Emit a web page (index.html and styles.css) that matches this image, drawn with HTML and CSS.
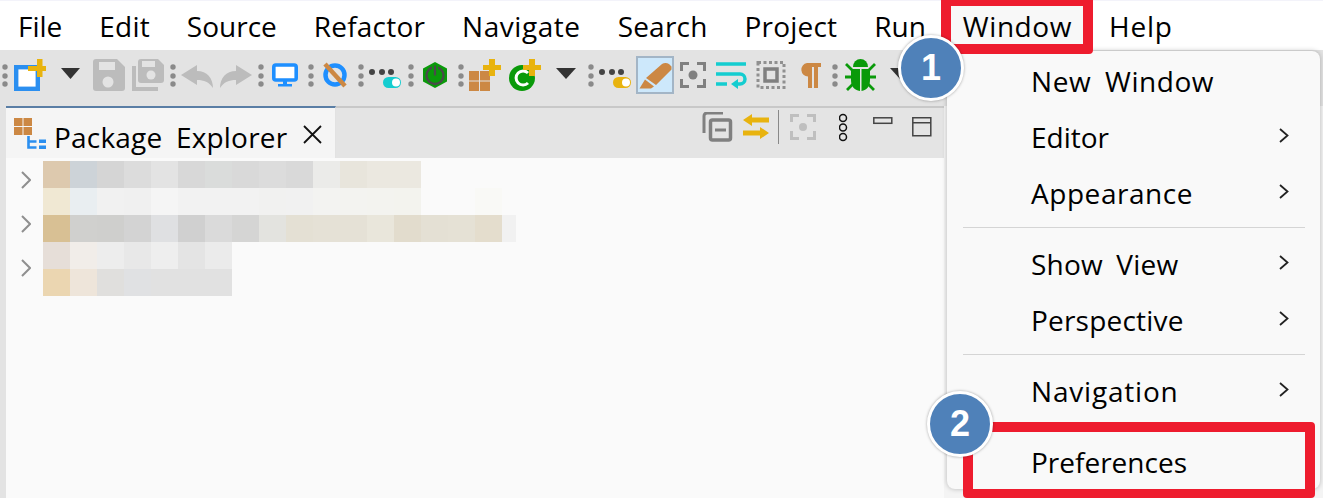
FILE: index.html
```html
<!DOCTYPE html>
<html lang="en">
<head>
<meta charset="utf-8">
<title>Eclipse Window menu</title>
<link rel="stylesheet" href="styles.css">
</head>
<body>
<div class="app">
  <nav class="menubar">
    <span class="mb-item">File</span><span class="mb-item t-a">Edit</span><span class="mb-item">Source</span><span class="mb-item t-a">Refactor</span><span class="mb-item t-b">Navigate</span><span class="mb-item t-a">Search</span><span class="mb-item t-a">Project</span><span class="mb-item">Run</span><span class="mb-item mb-active t-b">Window</span><span class="mb-item t-c">Help</span>
  </nav>

  <div class="toolbar">
    <svg width="12" height="56" viewBox="0 0 12 56"><g class="grip"><circle cx="3" cy="17" r="2.7"/><circle cx="3" cy="26" r="2.7"/><circle cx="3" cy="34" r="2.7"/></g></svg>
    <svg width="47" height="56" viewBox="0 0 47 56"><rect x="2.2" y="17.2" width="21.6" height="21.6" fill="#fff" stroke="#2b8ff0" stroke-width="4.4"/><path d="M23 9h5.500v7H32v5h-3.500v6H23v-6h-9v-5h9z" fill="#e8b30f"/></svg>
    <svg width="32" height="56" viewBox="0 0 32 56"><path d="M0 18h19l-9.500 11z" fill="#333"/></svg>
    <svg width="39" height="56" viewBox="0 0 39 56"><path d="M3 9h21l8 8v21a3 3 0 0 1-3 3H3a3 3 0 0 1-3-3V12a3 3 0 0 1 3-3z" fill="#bcbcbc"/><rect x="6" y="12" width="16" height="8" fill="#e3e3e3"/><circle cx="15" cy="32" r="5.500" fill="#e3e3e3"/></svg>
    <svg width="38" height="56" viewBox="0 0 38 56"><path d="M9 9h17l6 6v15a3 3 0 0 1-3 3H9a3 3 0 0 1-3-3V12a3 3 0 0 1 3-3z" fill="#bcbcbc"/><rect x="10" y="11" width="13" height="6" fill="#e3e3e3"/><circle cx="19" cy="25" r="4.500" fill="#e3e3e3"/><path d="M2 16v23h24" fill="none" stroke="#bcbcbc" stroke-width="4"/></svg>
    <svg width="11" height="56" viewBox="0 0 11 56"><g class="grip"><circle cx="3" cy="17" r="2.7"/><circle cx="3" cy="26" r="2.7"/><circle cx="3" cy="34" r="2.700"/></g></svg>
    <svg width="39" height="56" viewBox="0 0 39 56"><path d="M0 25l16-10v6c10 0 16 7 16 17-4-6-9-8-16-8v5z" fill="#bcbcbc"/></svg>
    <svg width="38" height="56" viewBox="0 0 38 56"><path d="M32 25L16 15v6C6 21 0 28 0 38c4-6 9-8 16-8v5z" fill="#bcbcbc"/></svg>
    <svg width="14" height="56" viewBox="0 0 14 56"><g class="grip"><circle cx="3" cy="17" r="2.7"/><circle cx="3" cy="26" r="2.7"/><circle cx="3" cy="34" r="2.7"/></g></svg>
    <svg width="36" height="56" viewBox="0 0 36 56"><rect x="1.800" y="15" width="22.400" height="15" rx="2" fill="#fff" stroke="#1e8fff" stroke-width="3.600"/><path d="M11 31h4v3h5v2.500H6V34h5z" fill="#1e8fff"/></svg>
    <svg width="15" height="56" viewBox="0 0 15 56"><g class="grip"><circle cx="3" cy="17" r="2.7"/><circle cx="3" cy="26" r="2.7"/><circle cx="3" cy="34" r="2.7"/></g></svg>
    <svg width="35" height="56" viewBox="0 0 35 56"><circle cx="12" cy="25" r="9.500" fill="none" stroke="#1e8fff" stroke-width="4.500"/><path d="M2 14l20 22" stroke="#cc8844" stroke-width="4.500"/></svg>
    <svg width="11" height="56" viewBox="0 0 11 56"><g class="grip"><circle cx="3" cy="17" r="2.7"/><circle cx="3" cy="26" r="2.7"/><circle cx="3" cy="34" r="2.7"/></g></svg>
    <svg width="39" height="56" viewBox="0 0 39 56"><g fill="#444"><circle cx="3" cy="22" r="3"/><circle cx="13" cy="22" r="3"/><circle cx="22" cy="22" r="3"/></g><rect x="14" y="27" width="18" height="11" rx="5.500" fill="#14cdd0"/><circle cx="27" cy="32.500" r="4" fill="#fff"/></svg>
    <svg width="15" height="56" viewBox="0 0 15 56"><g class="grip"><circle cx="3" cy="17" r="2.7"/><circle cx="3" cy="26" r="2.7"/><circle cx="3" cy="34" r="2.7"/></g></svg>
    <svg width="35" height="56" viewBox="0 0 35 56"><path d="M12 12l12 6.500v13L12 38 0 31.500v-13z" fill="#0a9a0a"/><circle cx="12" cy="25.500" r="8.500" fill="none" stroke="#4a4a4a" stroke-width="2.400"/><path d="M12 15v9" stroke="#0a9a0a" stroke-width="6"/><path d="M12 15.500v10" stroke="#4a4a4a" stroke-width="2.200"/></svg>
    <svg width="11" height="56" viewBox="0 0 11 56"><g class="grip"><circle cx="3" cy="17" r="2.7"/><circle cx="3" cy="26" r="2.7"/><circle cx="3" cy="34" r="2.7"/></g></svg>
    <svg width="40" height="56" viewBox="0 0 40 56"><g fill="#cc8844"><rect y="21" width="10" height="9.500"/><rect x="11" y="21" width="10" height="9.500"/><rect y="31.500" width="10" height="9.500"/><rect x="11" y="31.500" width="10" height="9.500"/></g><path d="M20 9h6v6h6v5h-6v6h-6v-6h-6v-5h6z" fill="#e8b30f"/></svg>
    <svg width="47" height="56" viewBox="0 0 47 56"><circle cx="13" cy="28" r="13" fill="#0a9a0a"/><path d="M19 23a7 7 0 1 0 0 10" fill="none" stroke="#fff" stroke-width="3"/><path d="M20 9h6v6h6v5h-6v6h-6v-6h-6v-5h6z" fill="#e8b30f"/></svg>
    <svg width="32" height="56" viewBox="0 0 32 56"><path d="M0 18h20l-10 11z" fill="#333"/></svg>
    <svg width="10" height="56" viewBox="0 0 10 56"><g class="grip"><circle cx="3" cy="17" r="2.7"/><circle cx="3" cy="26" r="2.7"/><circle cx="3" cy="34" r="2.7"/></g></svg>
    <svg width="38" height="56" viewBox="0 0 38 56"><g fill="#444"><circle cx="4" cy="22" r="3"/><circle cx="14" cy="22" r="3"/><circle cx="23" cy="22" r="3"/></g><rect x="15" y="27" width="18" height="11" rx="5.500" fill="#e8b30f"/><circle cx="28" cy="32.500" r="4" fill="#fff"/></svg>
    <svg width="44" height="56" viewBox="0 0 44 56"><rect x="1" y="7" width="36" height="36" fill="#cde8fb" stroke="#a3b5c6" stroke-width="2"/><path d="M26 14c2-1.500 5-1.500 7 0l2.500 2.500v3L20 35l-10-7zM9 29.500l9 7-3 2H3.500z" fill="#cc8844"/></svg>
    <svg width="35" height="56" viewBox="0 0 35 56"><path d="M1.500 21v-7.500H9M17 13.500h7.500V21M24.500 29v7.500H17M9 36.500H1.500V29" fill="none" stroke="#808080" stroke-width="3"/><circle cx="13" cy="25" r="4.500" fill="#808080"/></svg>
    <svg width="41" height="56" viewBox="0 0 41 56"><path d="M1 14h30M1 24h24a5 5 0 0 1 0 10h-6M1 34h11" fill="none" stroke="#14cdd0" stroke-width="3.500"/><path d="M16 34l7-5v10z" fill="#14cdd0"/></svg>
    <svg width="43" height="56" viewBox="0 0 43 56"><rect x="2" y="12.500" width="26" height="25" fill="none" stroke="#909090" stroke-width="3" stroke-dasharray="3 2.500"/><rect x="9" y="19" width="12" height="12" fill="none" stroke="#808080" stroke-width="3.500"/></svg>
    <svg width="33" height="56" viewBox="0 0 33 56"><path d="M8 13h14v4h-3v21h-4V17h-2v21H9V26.500A6.800 6.800 0 0 1 8 13z" fill="#cc8844"/></svg>
    <svg width="13" height="56" viewBox="0 0 13 56"><g class="grip"><circle cx="3" cy="17" r="2.7"/><circle cx="3" cy="26" r="2.7"/><circle cx="3" cy="34" r="2.7"/></g></svg>
    <svg width="45" height="56" viewBox="0 0 45 56"><path d="M8 17a7.500 8 0 0 1 15 0z" fill="#0a9a0a"/><path d="M6 19h9v22C9 40 6 36 6 30zM16.500 19H25v11c0 6-3 10-8.500 11z" fill="#0a9a0a"/><path d="M1 14l6 6M30 14l-6 6M0 27h7M31 27h-7M2 40l6-6M29 40l-6-6" stroke="#0a9a0a" stroke-width="2.800"/></svg>
    <svg width="32" height="56" viewBox="0 0 32 56"><path d="M0 18h20l-10 11z" fill="#333"/></svg>
  </div>

  <main class="workbench">
    <section class="view">
      <div class="view-head">
        <div class="tab">
          <svg class="tab-icon" width="32" height="32" viewBox="0 0 32 32"><g fill="#cc8844"><rect width="8.500" height="8"/><rect x="9.500" width="8.500" height="8"/><rect y="9" width="8.500" height="8"/><rect x="9.500" y="9" width="8.500" height="8"/></g><path d="M14.500 18v11.500h8M14.500 23.500h8" fill="none" stroke="#2b8ff0" stroke-width="2.600"/><rect x="25" y="21.500" width="7" height="3.500" fill="#2b8ff0"/><rect x="25" y="27.500" width="7" height="3.500" fill="#2b8ff0"/></svg>
          <span class="tab-label">Package Explorer</span>
          <svg class="tab-close" width="19" height="19" viewBox="0 0 19 19"><path d="M1 1l17 17M18 1L1 18" stroke="#111" stroke-width="1.800"/></svg>
        </div>
        <div class="view-tools">
          <svg width="41" height="36" viewBox="0 0 41 36"><path d="M2 21V4a3 3 0 0 1 3-3h16" fill="none" stroke="#808080" stroke-width="3"/><rect x="8.500" y="8" width="20" height="20" rx="2" fill="none" stroke="#808080" stroke-width="3.500"/><path d="M13 18h11" stroke="#808080" stroke-width="3"/></svg>
          <svg width="35" height="36" viewBox="0 0 35 36"><path d="M0 8l9-6v3.500h17v5H9V14zM26 21l-9-6v3.500H0v5h17V27z" fill="#e8b30f"/></svg>
          <span class="tool-sep"></span>
          <svg width="49" height="36" viewBox="0 0 49 36"><path d="M1.500 10V3.500H9M17 3.500h7.500V10M24.500 19v7.500H17M9 26.500H1.500V19" fill="none" stroke="#bfbfbf" stroke-width="3"/><circle cx="13" cy="15" r="4" fill="#bfbfbf"/></svg>
          <svg width="34" height="36" viewBox="0 0 34 36"><g fill="none" stroke="#111" stroke-width="1.500"><circle cx="4" cy="6" r="3.500"/><circle cx="4" cy="15.500" r="3.500"/><circle cx="4" cy="25" r="3.500"/></g></svg>
          <svg width="39" height="36" viewBox="0 0 39 36"><rect x=".8" y="5.800" width="18" height="5.500" fill="none" stroke="#444" stroke-width="1.500"/></svg>
          <svg width="20" height="36" viewBox="0 0 20 36"><path d="M.8 5.800h18v18H.8zM.8 10.800h18" fill="none" stroke="#444" stroke-width="1.500"/></svg>
        </div>
      </div>
      <div class="tree">
        <div class="tree-row"><svg width="10" height="18" viewBox="0 0 10 18"><path d="M1 1l8 8-8 8" fill="none" stroke="#8f8f8f" stroke-width="2"/></svg></div>
        <div class="tree-row"><svg width="10" height="18" viewBox="0 0 10 18"><path d="M1 1l8 8-8 8" fill="none" stroke="#8f8f8f" stroke-width="2"/></svg></div>
        <div class="tree-row"><svg width="10" height="18" viewBox="0 0 10 18"><path d="M1 1l8 8-8 8" fill="none" stroke="#8f8f8f" stroke-width="2"/></svg></div>
        <div class="blur">
          <div class="blur-row"><i style="background:#ddc9ae"></i><i style="background:#cdd3d8"></i><i style="background:#d5d5d5"></i><i style="background:#dcdcdc"></i><i style="background:#e3e3e3"></i><i style="background:#d8d8d8"></i><i style="background:#dadcdb"></i><i style="background:#d9d9d9"></i><i style="background:#dcdcdc"></i><i style="background:#d9d9d9"></i><i style="background:#ebebe9"></i><i style="background:#e8e5dc"></i><i style="background:#ebe8e0"></i><i style="background:#ebe8e0"></i></div>
          <div class="blur-row"><i style="background:#f0e8d3"></i><i style="background:#e9eef1"></i><i style="background:#f1f1f1"></i><i style="background:#f0f0f0"></i><i style="background:#f5f5f5"></i><i style="background:#f2f2f2"></i><i style="background:#f2f2f2"></i><i style="background:#f2f2f2"></i><i style="background:#f1f1f0"></i><i style="background:#f1f1f1"></i><i style="background:#f3f3f1"></i><i style="background:#f3f3f0"></i><i style="background:#f3f3ef"></i><i style="background:#f3f3ee"></i><i></i><i></i><i style="background:#f9f9f6"></i><i style="background:#fafafa"></i></div>
          <div class="blur-row"><i style="background:#d8c094"></i><i style="background:#d0d0ce"></i><i style="background:#cfcfcd"></i><i style="background:#d3d3d3"></i><i style="background:#dfe0e2"></i><i style="background:#d0d0d0"></i><i style="background:#dadada"></i><i style="background:#d5d5d4"></i><i style="background:#e3e3df"></i><i style="background:#e4e0d4"></i><i style="background:#e5e1d6"></i><i style="background:#e5e1d6"></i><i style="background:#e9e6db"></i><i style="background:#e2dccd"></i><i style="background:#e4e0d4"></i><i style="background:#e5e1d5"></i><i style="background:#e4ddcd"></i><i class="half" style="background:#f1f1f1"></i></div>
          <div class="blur-row"><i style="background:#e6ded8"></i><i style="background:#f1ede9"></i><i style="background:#ededed"></i><i style="background:#e8e8e8"></i><i style="background:#eeeeee"></i><i style="background:#e4e4e4"></i><i style="background:#ebebeb"></i></div>
          <div class="blur-row"><i style="background:#ebd6b1"></i><i style="background:#eee5da"></i><i style="background:#e0dfdd"></i><i style="background:#e0e1e3"></i><i style="background:#e1e1e1"></i><i style="background:#e1e1e1"></i><i style="background:#e1e1e1"></i></div>
        </div>
      </div>
    </section>
  </main>

  <div class="popup">
    <div class="pm-item t-b">New Window</div>
    <div class="pm-item">Editor<svg class="pm-chev" width="10" height="15" viewBox="0 0 10 15"><path d="M1 1l7.500 6.500L1 14" fill="none" stroke="#222" stroke-width="1.800"/></svg></div>
    <div class="pm-item t-b">Appearance<svg class="pm-chev" width="10" height="15" viewBox="0 0 10 15"><path d="M1 1l7.500 6.500L1 14" fill="none" stroke="#222" stroke-width="1.800"/></svg></div>
    <div class="pm-sep"></div>
    <div class="pm-item t-a">Show View<svg class="pm-chev" width="10" height="15" viewBox="0 0 10 15"><path d="M1 1l7.500 6.500L1 14" fill="none" stroke="#222" stroke-width="1.800"/></svg></div>
    <div class="pm-item t-a">Perspective<svg class="pm-chev" width="10" height="15" viewBox="0 0 10 15"><path d="M1 1l7.500 6.500L1 14" fill="none" stroke="#222" stroke-width="1.800"/></svg></div>
    <div class="pm-sep"></div>
    <div class="pm-item t-c">Navigation<svg class="pm-chev" width="10" height="15" viewBox="0 0 10 15"><path d="M1 1l7.500 6.500L1 14" fill="none" stroke="#222" stroke-width="1.800"/></svg></div>
    <div class="pm-gap"></div>
    <div class="pm-item">Preferences</div>
  </div>

  <div class="mark mark-window"></div>
  <div class="mark mark-prefs"></div>
  <div class="badge badge-1">1</div>
  <div class="badge badge-2">2</div>
</div>
</body>
</html>
```

FILE: styles.css
```css
* { box-sizing: border-box; }
html, body { margin: 0; padding: 0; }
body { font-family: "Open Sans", "Noto Sans", sans-serif; color: #000; background: #fbfbfb; overflow: hidden; }

.app { position: relative; width: 1323px; height: 498px; overflow: hidden; background: #f4f4f4; }

.t-a { letter-spacing: .2px; }
.t-b { letter-spacing: .55px; }
.t-c { letter-spacing: .8px; }

.menubar { display: flex; height: 50px; background: #fff; font-size: 28px; line-height: 50px; border-top: 1px solid #f3f3fa; }
.mb-item { padding: 0 18.5px; white-space: pre; }
.mb-item:first-child { padding-left: 18px; }
.mb-active { background: #f8f8f8; }

.toolbar { display: flex; height: 56px; padding-left: 2px; background: #e3e3e3; }
.toolbar svg { flex: none; display: block; }
.grip circle { fill: #8a8a8a; }

.workbench { height: 392px; width: 944px; padding-left: 6px; background: #e3e3e3; }
.view { display: flex; flex-direction: column; height: 100%; }

.view-head { display: flex; justify-content: space-between; height: 52px; background: #e4e4e4; border-top: 2px solid #c8c8c8; }
.tab { display: flex; align-items: flex-start; width: 330px; height: 52px; margin-top: -2px; padding: 10px 0 0 8px; background: #f5f5f5; border-top: 2px solid #5a7ea5; border-right: 1px solid #e2e2e2; }
.tab-icon { flex: none; }
.tab-label { margin: 2px 0 0 8px; font-size: 28px; line-height: 34px; white-space: pre; word-spacing: 6px; letter-spacing: .2px; }
.tab-close { flex: none; margin: 7px 0 0 16px; }

.view-tools { display: flex; align-items: flex-start; padding: 2px 12px 0 0; }
.view-tools svg { flex: none; display: block; margin-top: 2px; }
.tool-sep { width: 1px; height: 34px; margin: 0 11px 0 0; background: #888; }

.tree { position: relative; flex: 1; background: #fafafa; }
.tree-row { display: flex; align-items: center; height: 44px; padding-left: 15px; }
.tree-row svg { display: block; }

.blur { position: absolute; left: 37px; top: 3px; }
.blur-row { display: flex; height: 27px; }
.blur-row i { display: block; flex: none; width: 27px; height: 27px; }
.blur-row i.half { width: 14px; }

.popup { position: absolute; left: 947px; top: 51px; width: 373px; height: 438px; padding-top: 2px; background: #f9f9f9; border-radius: 8px; box-shadow: 0 0 5px rgba(0, 0, 0, .25); font-size: 28px; word-spacing: 6px; }
.pm-item { display: flex; align-items: center; justify-content: space-between; height: 56px; padding: 0 31px 0 84px; white-space: pre; }
.pm-chev { display: block; margin-bottom: 3px; }
.pm-sep { height: 15px; margin: 0 15px 0 16px; padding-top: 6px; }
.pm-sep::before { content: ""; display: block; height: 1px; background: #d5d5d5; }
.pm-gap { height: 15px; }

.mark { position: absolute; border: 10px solid #ee1c2e; border-radius: 4px; }
.mark-window { left: 941px; top: -4px; width: 152px; height: 58px; }
.mark-prefs { left: 963px; top: 422px; width: 352px; height: 76px; border-bottom-width: 9px; }

.badge { position: absolute; display: flex; align-items: center; justify-content: center; width: 66px; height: 66px; border: 3px solid #fff; border-radius: 50%; background: #4f81b9; color: #fff; font-family: "Liberation Sans", Arial, sans-serif; font-weight: 700; font-size: 36px; box-shadow: 0 0 3px rgba(0, 0, 0, .35); }
.badge-1 { left: 898px; top: 35px; }
.badge-2 { left: 927px; top: 391px; }
```
